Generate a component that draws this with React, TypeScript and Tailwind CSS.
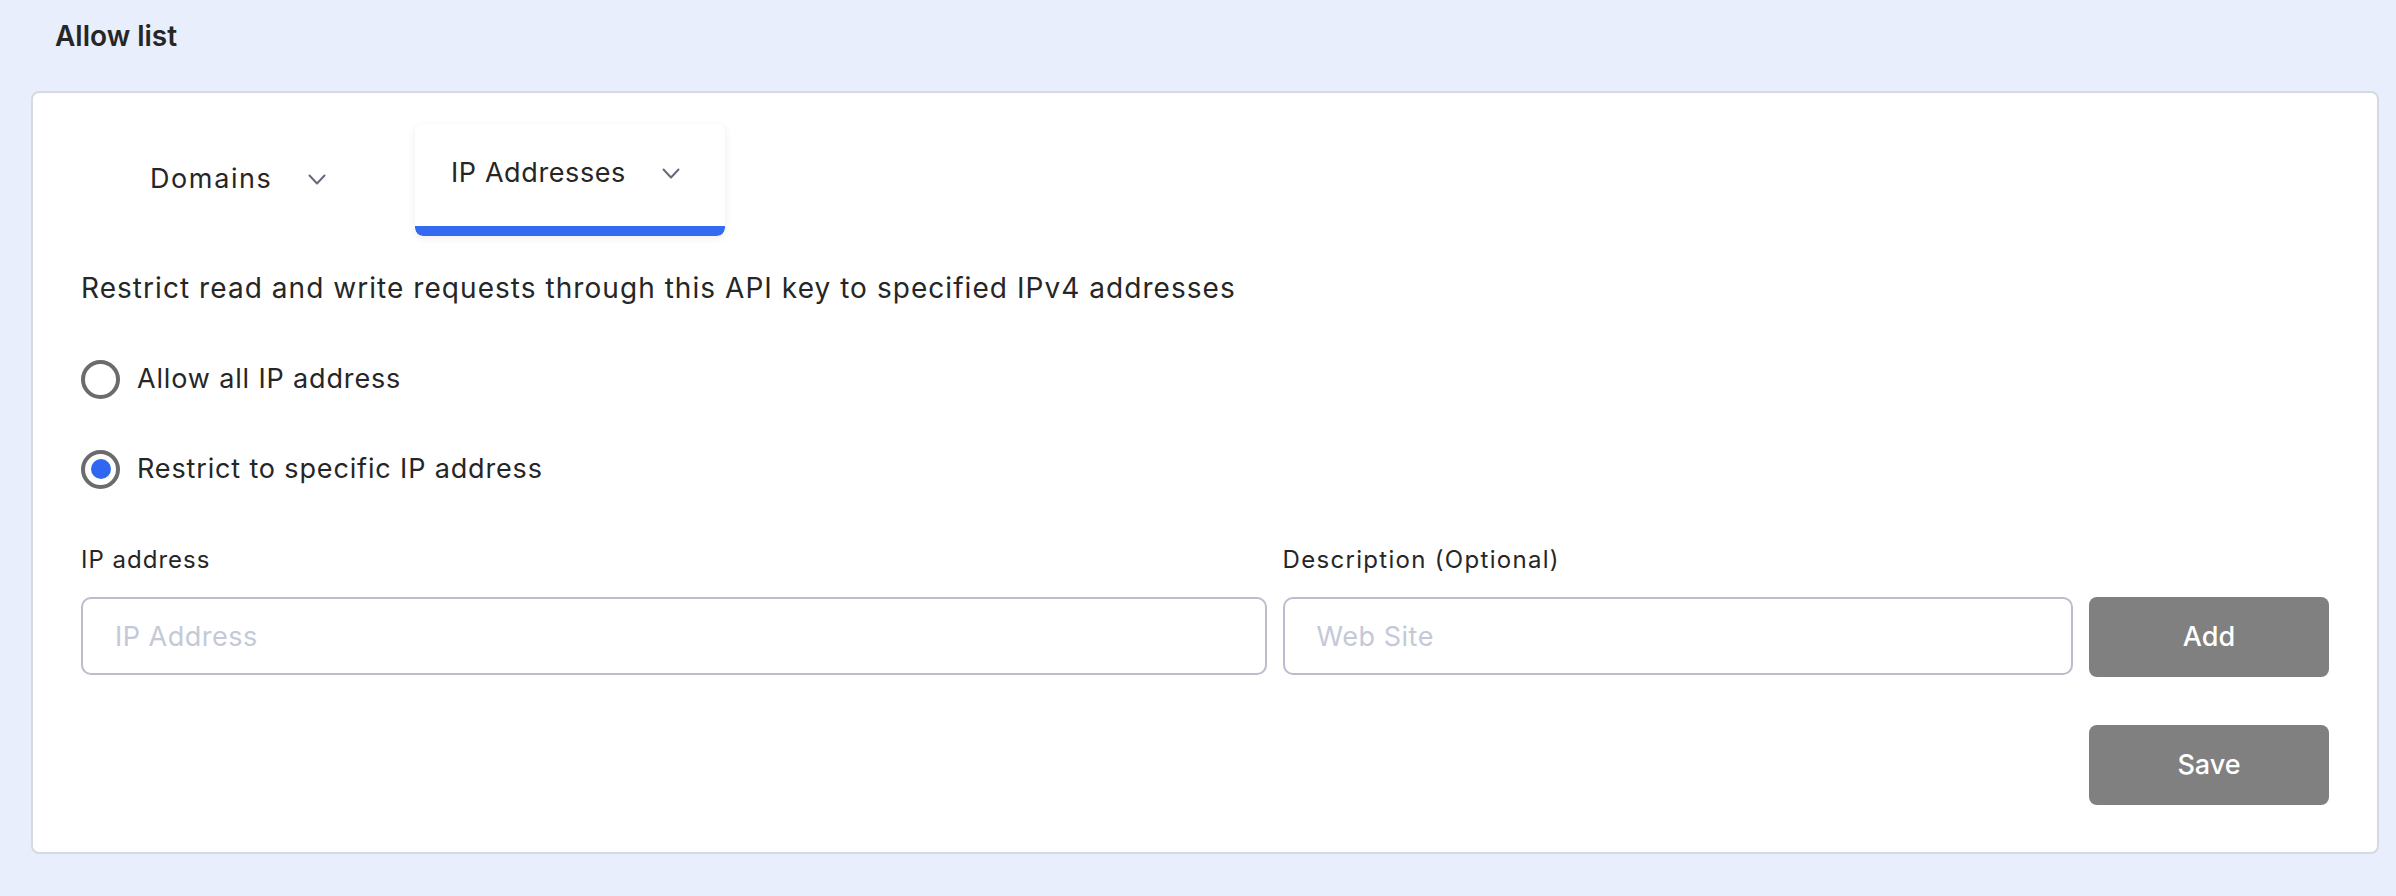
import React from "react";

const FONT = { fontFamily: "Inter, 'Noto Sans', sans-serif" };

function Chevron() {
  return (
    <svg width="18" height="11" viewBox="0 0 18 11" fill="none" className="shrink-0">
      <path d="M1.5 1.5 L9 9.5 L16.5 1.5" stroke="#646a78" strokeWidth="2" strokeLinecap="round" strokeLinejoin="round" />
    </svg>
  );
}

function Radio({ checked, label }: { checked?: boolean; label: string }) {
  return (
    <label className="flex h-10 items-center gap-[17px]">
      <span className="flex h-[39px] w-[39px] shrink-0 items-center justify-center rounded-full border-4 border-[#6b6b6b] bg-white">
        {checked && <span className="h-5 w-5 rounded-full bg-[#3067f0]" />}
      </span>
      <span className="text-[27px] leading-10 tracking-[0.85px] text-[#262626]">{label}</span>
    </label>
  );
}

export default function App() {
  return (
    <div style={FONT} className="min-h-[896px] bg-[#e8eefb] pl-[31px] pr-[17px] pt-[18px] pb-[43px]">
      <h2 className="pl-6 text-[28px] font-semibold leading-9 text-[#262626]">Allow list</h2>

      <div className="mt-[37px] rounded-lg border-2 border-[#d5d9e0] bg-white px-[48px] pt-[31px] pb-[47px]">
        {/* tabs */}
        <div className="flex items-start pl-[33px]">
          <button className="flex h-[112px] w-[301px] items-start pl-9 pt-[35px]">
            <span className="flex h-10 items-center gap-9">
              <span className="text-[27px] tracking-[1.6px] text-[#262626]">Domains</span>
              <Chevron />
            </span>
          </button>
          <button className="flex h-[112px] w-[310px] flex-col overflow-hidden rounded-lg bg-white shadow-[0_2px_8px_rgba(0,0,0,0.07)]">
            <span className="mt-[29px] flex h-10 items-center gap-9 pl-9">
              <span className="text-[27px] tracking-[0.6px] text-[#262626]">IP Addresses</span>
              <Chevron />
            </span>
            <span className="mt-auto h-[10px] w-full rounded-b-lg bg-[#3469f2]" />
          </button>
        </div>

        <p className="mt-[32px] text-[28px] leading-10 tracking-[1.05px] text-[#262626]">
          Restrict read and write requests through this API key to specified IPv4 addresses
        </p>

        <div className="mt-[51px] flex flex-col gap-[50px]">
          <Radio label="Allow all IP address" />
          <Radio checked label="Restrict to specific IP address" />
        </div>

        <div className="mt-[55px] grid grid-cols-[3fr_2fr_240px] gap-x-4 gap-y-[21px]">
          <span className="text-[24px] leading-8 tracking-[1px] text-[#262626]">IP address</span>
          <span className="text-[24px] leading-8 tracking-[1.3px] text-[#262626]">Description (Optional)</span>
          <span />
          <input
            placeholder="IP Address"
            className="h-[78px] rounded-[10px] border-2 border-[#b9bdcd] px-[32px] text-[27px] tracking-[0.5px] text-[#262626] outline-none placeholder:text-[#c4c9d7]"
          />
          <input
            placeholder="Web Site"
            className="h-[78px] rounded-[10px] border-2 border-[#b9bdcd] px-[32px] text-[27px] tracking-[0.5px] text-[#262626] outline-none placeholder:text-[#c4c9d7]"
          />
          <button className="h-20 self-center rounded-lg bg-[#808080] text-[27px] font-medium text-white">Add</button>
        </div>

        <div className="mt-[48px] flex justify-end">
          <button className="h-20 w-[240px] rounded-lg bg-[#808080] text-[27px] font-medium text-white">Save</button>
        </div>
      </div>
    </div>
  );
}
